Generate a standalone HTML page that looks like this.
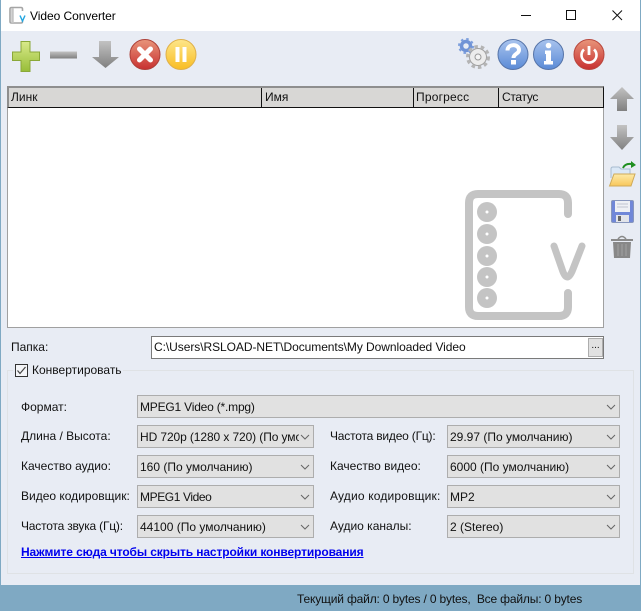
<!DOCTYPE html>
<html><head><meta charset="utf-8">
<style>
html,body{margin:0;padding:0;}
body{width:641px;height:611px;position:relative;overflow:hidden;background:#e8ecf4;font:12px "Liberation Sans",sans-serif;color:#111;}
.a{position:absolute;white-space:nowrap;}
.c{position:absolute;box-sizing:border-box;height:23px;background:#e1e1e1;border:1px solid #adadad;line-height:23px;padding-left:2px;overflow:hidden;white-space:nowrap;}
.c span{display:block;overflow:hidden;height:21px;}
.c svg{position:absolute;right:3px;top:8px;}
.h{position:absolute;top:87px;height:20px;line-height:21px;box-sizing:border-box;padding-left:2px;}
</style></head><body>
<svg width="0" height="0" style="position:absolute"><defs>
<linearGradient id="gr" x1="0" y1="0" x2="0" y2="1"><stop offset="0" stop-color="#c2c2c2"/><stop offset="1" stop-color="#808080"/></linearGradient>
<linearGradient id="gn" x1="0" y1="0" x2="0" y2="1"><stop offset="0" stop-color="#d9ea8a"/><stop offset="1" stop-color="#97bd38"/></linearGradient>
<linearGradient id="rd" x1="0" y1="0" x2="0" y2="1"><stop offset="0" stop-color="#e8957a"/><stop offset="1" stop-color="#c83030"/></linearGradient>
<linearGradient id="yl" x1="0" y1="0" x2="0" y2="1"><stop offset="0" stop-color="#fde68a"/><stop offset="1" stop-color="#f9bd22"/></linearGradient>
<linearGradient id="bl" x1="0" y1="0" x2="0" y2="1"><stop offset="0" stop-color="#a9c4ee"/><stop offset="1" stop-color="#5a8ad6"/></linearGradient>
<linearGradient id="fo" x1="0" y1="0" x2="0" y2="1"><stop offset="0" stop-color="#fdeaa8"/><stop offset="1" stop-color="#f8c65a"/></linearGradient>
<symbol id="chev" viewBox="0 0 10 6"><path d="M1 1L5 5L9 1" fill="none" stroke="#666" stroke-width="1"/></symbol>
</defs></svg>

<div class="a" style="left:0;top:0;width:641px;height:31px;background:#fff;"></div>
<div class="a" style="left:0;top:0;width:1px;height:611px;background:#7fa9c3;"></div>
<div class="a" style="right:0;top:0;width:1px;height:611px;background:#7fa9c3;"></div>
<div class="a" style="left:0;top:585px;width:641px;height:26px;background:#7fa9c3;"></div>

<svg class="a" style="left:8px;top:5px" width="18" height="20"><path d="M8 2.500H3.500Q2 2.500 2 4V16.500Q2 18 3.500 18H13Q14.500 18 14.500 16.500V15M14.500 6V4Q14.500 2.500 13 2.500H8" fill="none" stroke="#a5a5a5" stroke-width="1.600"/><path d="M4.500 3V18" stroke="#c4c4c4" stroke-width="2.500"/><path d="M12 10.500L14.500 16L17 10.500" fill="none" stroke="#22a5e0" stroke-width="1.400"/></svg>
<div class="a" style="left:30px;top:8px;font-size:12px;line-height:16px;color:#000;letter-spacing:-.05px;">Video Converter</div>
<svg class="a" style="left:510px;top:5px" width="125" height="21"><path d="M11 10.500H21" stroke="#111" stroke-width="1"/><rect x="56.500" y="5.500" width="9" height="9" fill="none" stroke="#111"/><path d="M102.500 5.500L112 15M112 5.500L102.500 15" stroke="#111" stroke-width="1"/></svg>

<!-- toolbar left -->
<svg class="a" style="left:0;top:30px" width="210" height="50">
<path d="M21 11.500H30V22H39.500V30.500H30V41.500H21V30.500H12.500V22H21Z" fill="url(#gn)" stroke="#8aa838" stroke-width="1"/>
<rect x="50" y="21.500" width="27" height="7" fill="url(#gr)"/>
<path d="M99 11H111V27H119L105.500 38L92 27H99Z" fill="url(#gr)"/>
<circle cx="145" cy="24.500" r="15" fill="url(#rd)" stroke="#ad4038"/>
<path d="M139.500 19L150.500 30M150.500 19L139.500 30" stroke="#fff" stroke-width="5" stroke-linecap="round"/>
<circle cx="181" cy="24.500" r="15" fill="url(#yl)" stroke="#dfb04a"/>
<rect x="175.500" y="17" width="4" height="15" fill="#fff"/><rect x="182.500" y="17" width="4" height="15" fill="#fff"/>
</svg>

<!-- toolbar right -->
<svg class="a" style="left:455px;top:30px" width="155" height="50">
<circle cx="11" cy="16" r="4.500" fill="none" stroke="#7093d6" stroke-width="3.500"/>
<circle cx="11" cy="16" r="7" fill="none" stroke="#7c9edc" stroke-width="2" stroke-dasharray="2.500 3"/>
<circle cx="23" cy="27" r="8.500" fill="#ececec" stroke="#a0a0a0"/>
<circle cx="23" cy="27" r="10.500" fill="none" stroke="#b4b4b4" stroke-width="3" stroke-dasharray="3.500 3"/>
<circle cx="23" cy="27" r="3" fill="#f4f4f4" stroke="#999"/>
<circle cx="58" cy="24.500" r="15" fill="url(#bl)" stroke="#5674a8"/>
<path d="M52.500 20.500C52.500 13.500 64 13.500 64 20C64 24 58.500 23.500 58.500 28" fill="none" stroke="#fff" stroke-width="4"/>
<rect x="56" y="30" width="5" height="4.500" fill="#fff"/>
<circle cx="93.500" cy="24.500" r="15" fill="url(#bl)" stroke="#5674a8"/>
<circle cx="93.500" cy="15.500" r="2.800" fill="#fff"/>
<path d="M90 20.500H96V31H98V34.500H89V31H91V24H90Z" fill="#fff"/>
<circle cx="134" cy="24.500" r="15" fill="url(#rd)" stroke="#b8463c"/>
<path d="M129 19.500A7.500 7.500 0 1 0 139 19.500" fill="none" stroke="#fff" stroke-width="2.600"/>
<path d="M134 16V25" stroke="#fff" stroke-width="2.800"/>
</svg>

<!-- list -->
<div class="a" style="left:7px;top:86px;width:597px;height:242px;box-sizing:border-box;background:#fff;border:1px solid #a0a0a0;"></div>
<div class="a" style="left:7px;top:86px;width:597px;height:22px;box-sizing:border-box;background:#d8d7d5;border:1px solid #111;border-top:2px solid #8e8e8e;border-left:2px solid #8e8e8e;"></div>
<div class="a" style="left:261px;top:88px;width:1px;height:19px;background:#111"></div>
<div class="a" style="left:413px;top:88px;width:1px;height:19px;background:#111"></div>
<div class="a" style="left:498px;top:88px;width:1px;height:19px;background:#111"></div>
<div class="h" style="left:9px;">Линк</div>
<div class="h" style="left:263px;">Имя</div>
<div class="h" style="left:414px;letter-spacing:.2px;">Прогресс</div>
<div class="h" style="left:500px;letter-spacing:-.3px;">Статус</div>

<!-- logo -->
<svg class="a" style="left:460px;top:185px" width="135" height="140">
<path d="M108 29V18Q108 9 99 9H18Q9 9 9 18V122Q9 131 18 131H99Q108 131 108 122V108" fill="none" stroke="#c4c4c4" stroke-width="8" stroke-linecap="round"/>
<g fill="#c4c4c4"><circle cx="27" cy="27" r="10"/><circle cx="27" cy="49" r="10"/><circle cx="27" cy="71" r="10"/><circle cx="27" cy="92" r="10"/><circle cx="27" cy="113" r="10"/></g>
<g fill="#fff"><circle cx="27" cy="27" r="1.500"/><circle cx="27" cy="49" r="1.500"/><circle cx="27" cy="71" r="1.500"/><circle cx="27" cy="92" r="1.500"/><circle cx="27" cy="113" r="1.500"/></g>
<path d="M94 61L102 84Q107 100 113 84L122 61" fill="none" stroke="#c4c4c4" stroke-width="7" stroke-linecap="round"/>
</svg>

<!-- side buttons -->
<svg class="a" style="left:606px;top:84px" width="32" height="178">
<path d="M4 15L16 3L28 15H21V27H11V15Z" fill="url(#gr)"/>
<path d="M11 41H21V53H28L16 66L4 53H11Z" fill="url(#gr)"/>
<path d="M5 94V85Q5 83 7 83H13L15 85H24V90" fill="#dbe8f6" stroke="#a8bcd0"/>
<path d="M3.500 102L8 90H29L25 102Z" fill="url(#fo)" stroke="#cfaa58"/>
<path d="M17 84Q19 79 26 80" fill="none" stroke="#1f8f1f" stroke-width="2"/><path d="M25 77L30 81L25 84Z" fill="#1f8f1f"/>
<rect x="5.500" y="116.500" width="22" height="22" rx="1.500" fill="#7087d8" stroke="#8796bc"/>
<rect x="9" y="117" width="15" height="11" fill="#eef0f4"/><path d="M11 120H22M11 123H22" stroke="#c0c4d0"/>
<rect x="10" y="131" width="13" height="7" fill="#e2e4ea"/><rect x="12" y="132" width="3" height="5" fill="#666"/>
<path d="M5 156H27" stroke="#8a8a8a" stroke-width="2"/><path d="M12 155Q16 150 20 155" fill="none" stroke="#888" stroke-width="1.500"/>
<path d="M7 158H25L24 174H8Z" fill="#888"/><path d="M12 160V172M16 160V172M20 160V172" stroke="#a2a2a2"/>
</svg>

<!-- folder -->
<div class="a" style="left:11px;top:340px;line-height:15px;">Папка:</div>
<div class="a" style="left:151px;top:336px;width:453px;height:23px;box-sizing:border-box;background:#fff;border:1px solid #7a7a7a;line-height:21px;padding-left:2px;letter-spacing:-.06px;">C:\Users\RSLOAD-NET\Documents\My Downloaded Video</div>
<div class="a" style="left:588px;top:338px;width:15px;height:19px;box-sizing:border-box;background:#e1e1e1;border:1px solid #adadad;text-align:center;line-height:14px;font-size:10px;">...</div>

<!-- group -->
<div class="a" style="left:7px;top:370px;width:627px;height:204px;box-sizing:border-box;border:1px solid #dfe2e5;"></div>
<div class="a" style="left:13px;top:362px;width:110px;height:17px;background:#e8ecf4;"></div>
<svg class="a" style="left:15px;top:364px" width="13" height="13"><rect x=".5" y=".5" width="12" height="12" fill="#f4f5f8" stroke="#333"/><path d="M2.500 6.500L5 9.500L10.500 3" fill="none" stroke="#444" stroke-width="1.200"/></svg>
<div class="a" style="left:32px;top:363px;line-height:15px;">Конвертировать</div>

<div class="a" style="left:21px;top:400px;line-height:15px;">Формат:</div>
<div class="c" style="left:137px;top:395px;width:483px;"><span style="letter-spacing:-.2px">MPEG1 Video (*.mpg)</span><svg width="10" height="6"><use href="#chev"/></svg></div>

<div class="a" style="left:21px;top:429px;line-height:15px;">Длина / Высота:</div>
<div class="c" style="left:137px;top:425px;width:177px;"><span style="width:159px;letter-spacing:-.1px">HD 720p (1280 x 720) (По умолчанию)</span><svg width="10" height="6"><use href="#chev"/></svg></div>
<div class="a" style="left:21px;top:459px;line-height:15px;">Качество аудио:</div>
<div class="c" style="left:137px;top:455px;width:177px;"><span>160 (По умолчанию)</span><svg width="10" height="6"><use href="#chev"/></svg></div>
<div class="a" style="left:21px;top:489px;line-height:15px;">Видео кодировщик:</div>
<div class="c" style="left:137px;top:485px;width:177px;"><span style="letter-spacing:-.4px">MPEG1 Video</span><svg width="10" height="6"><use href="#chev"/></svg></div>
<div class="a" style="left:21px;top:519px;line-height:15px;letter-spacing:-.2px;">Частота звука (Гц):</div>
<div class="c" style="left:137px;top:515px;width:177px;"><span>44100 (По умолчанию)</span><svg width="10" height="6"><use href="#chev"/></svg></div>

<div class="a" style="left:330px;top:429px;line-height:15px;letter-spacing:-.2px;">Частота видео (Гц):</div>
<div class="c" style="left:447px;top:425px;width:173px;"><span>29.97 (По умолчанию)</span><svg width="10" height="6"><use href="#chev"/></svg></div>
<div class="a" style="left:330px;top:459px;line-height:15px;">Качество видео:</div>
<div class="c" style="left:447px;top:455px;width:173px;"><span>6000 (По умолчанию)</span><svg width="10" height="6"><use href="#chev"/></svg></div>
<div class="a" style="left:330px;top:489px;line-height:15px;letter-spacing:.17px;">Аудио кодировщик:</div>
<div class="c" style="left:447px;top:485px;width:173px;"><span>MP2</span><svg width="10" height="6"><use href="#chev"/></svg></div>
<div class="a" style="left:330px;top:519px;line-height:15px;">Аудио каналы:</div>
<div class="c" style="left:447px;top:515px;width:173px;"><span>2 (Stereo)</span><svg width="10" height="6"><use href="#chev"/></svg></div>

<div class="a" style="left:21px;top:545px;line-height:15px;font-weight:bold;color:#0000ee;text-decoration:underline;letter-spacing:-.115px;">Нажмите сюда чтобы скрыть настройки конвертирования</div>
<div class="a" style="left:297px;top:592px;line-height:15px;color:#111;letter-spacing:-.17px;">Текущий файл: 0 bytes / 0 bytes,&nbsp; Все файлы: 0 bytes</div>
</body></html>
